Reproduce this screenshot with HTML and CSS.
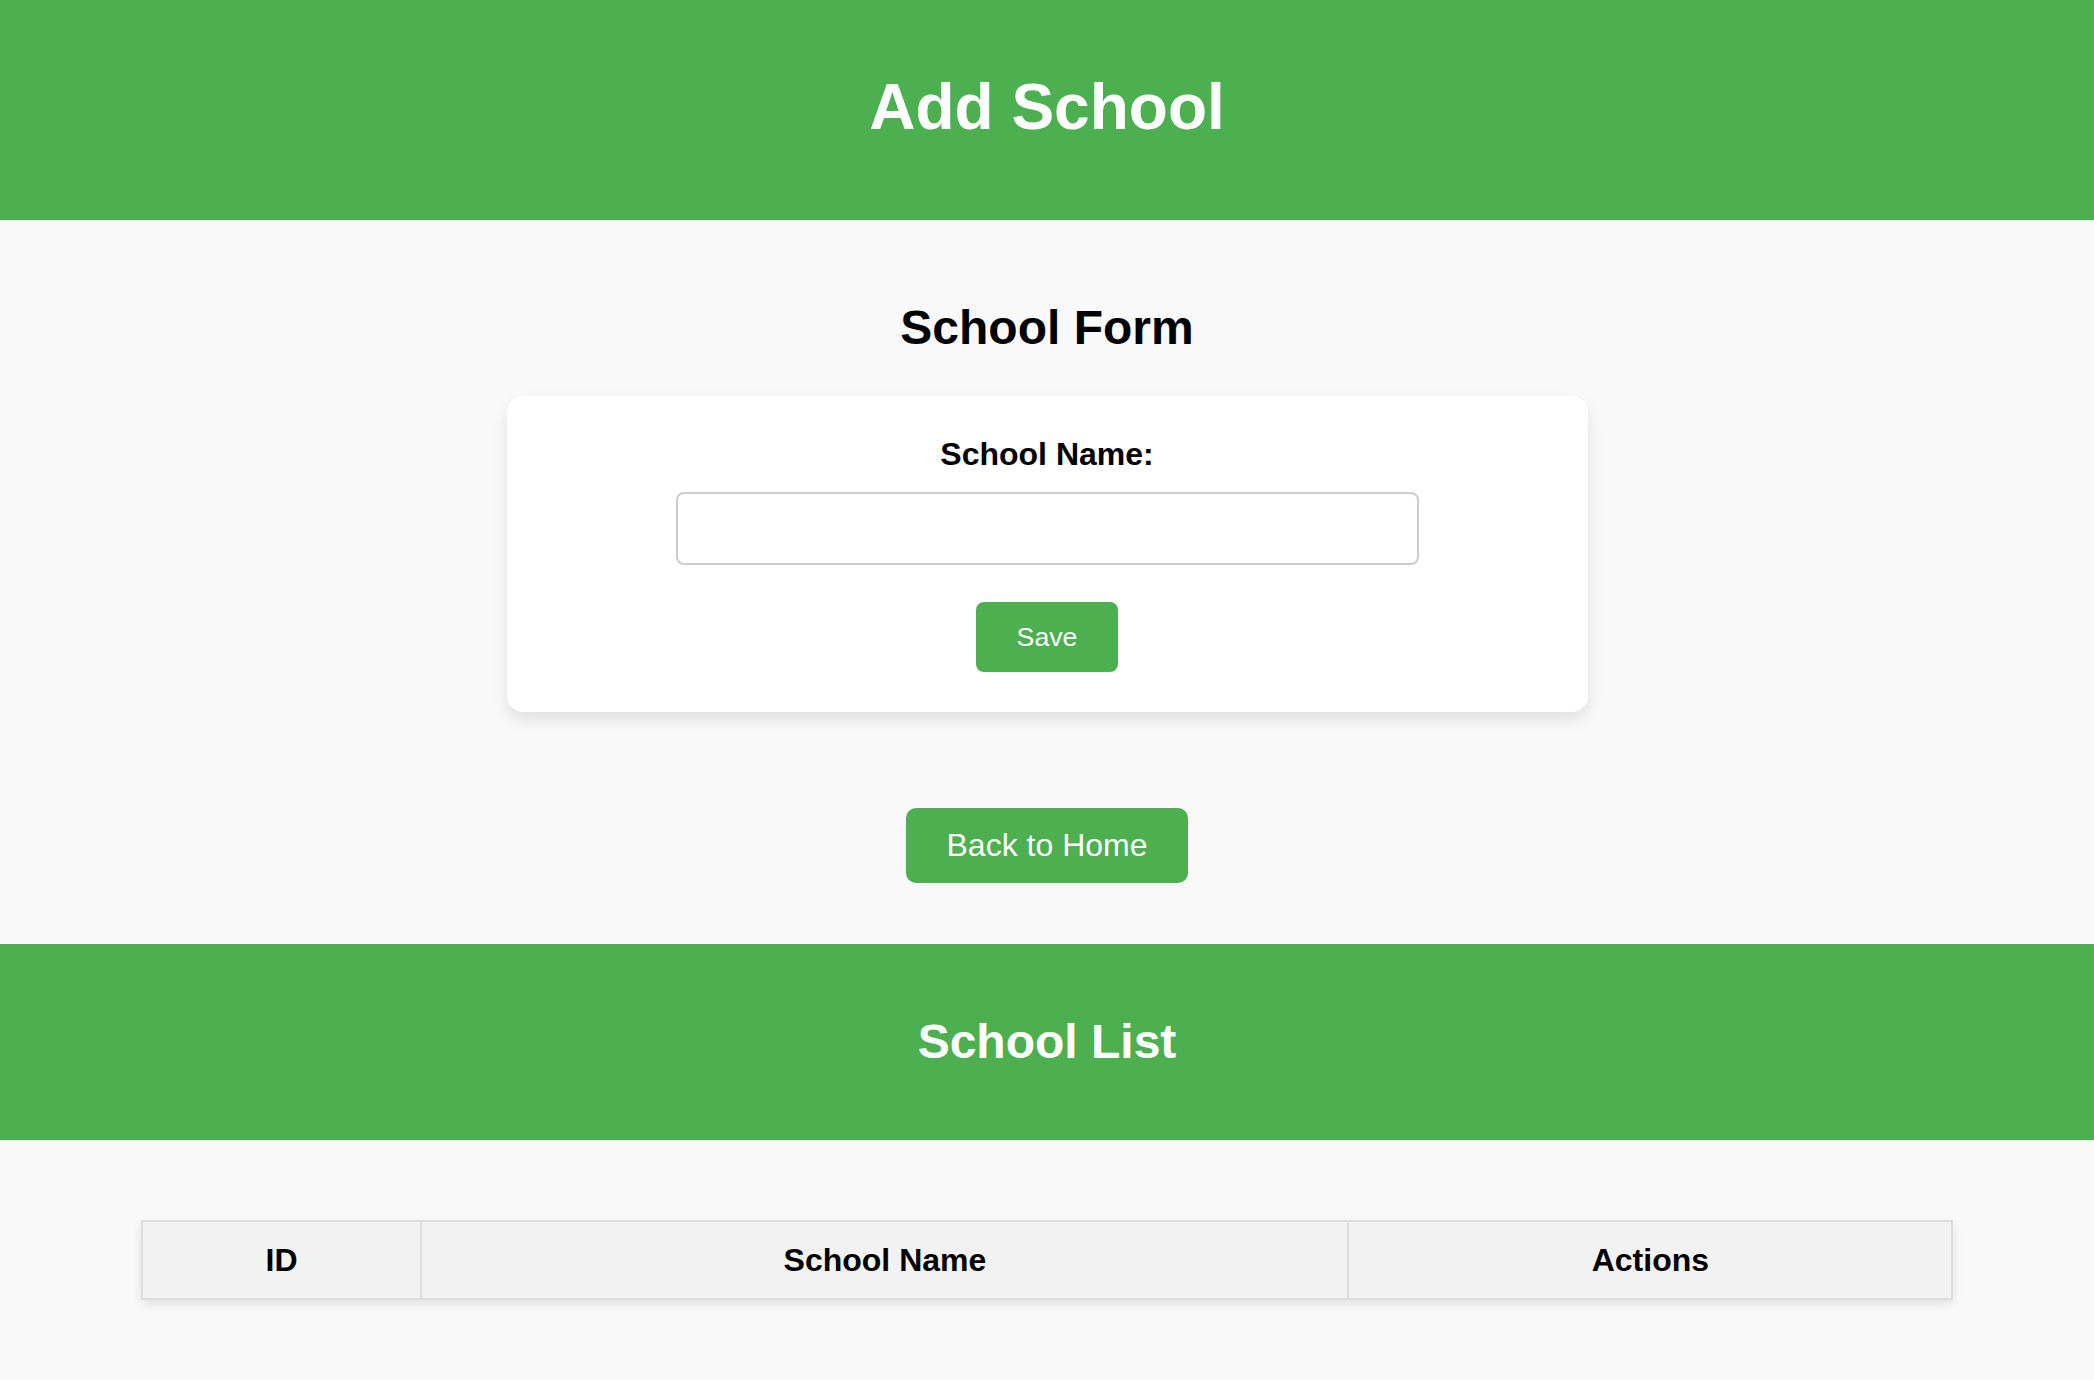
FILE: index.html
```html
<!DOCTYPE html>
<html lang="en">
<head>
<meta charset="utf-8">
<title>Add School</title>
<link rel="stylesheet" href="styles.css">
</head>
<body>
<header class="top-bar">
  <h1 class="top-title">Add School</h1>
</header>
<main class="form-section">
  <h2 class="section-title">School Form</h2>
  <form class="card">
    <label class="field-label" for="schoolName">School Name:</label>
    <input class="field-input" id="schoolName" type="text">
    <div class="actions-row">
      <button class="btn btn-save" type="button">Save</button>
    </div>
  </form>
  <div class="back-row">
    <a class="btn btn-back" href="#">Back to Home</a>
  </div>
</main>
<section class="list-bar">
  <h2 class="list-title">School List</h2>
</section>
<section class="list-section">
  <table class="school-table">
    <thead>
      <tr>
        <th class="col-id">ID</th>
        <th class="col-name">School Name</th>
        <th class="col-actions">Actions</th>
      </tr>
    </thead>
    <tbody></tbody>
  </table>
</section>
</body>
</html>
```

FILE: styles.css
```css
html, body {
  margin: 0;
  padding: 0;
}

body {
  background: #f9f9f9;
  font-family: "Liberation Sans", Arial, sans-serif;
  color: #000;
}

.top-bar {
  background: #4caf50;
  color: #fff;
  padding: 30px 0;
  text-align: center;
}

.top-title {
  margin: 40px 0 46px;
  font-size: 64px;
  line-height: 74px;
  font-weight: bold;
}

.form-section {
  padding: 40px 0 61px;
  text-align: center;
}

.section-title {
  margin: 40px 0;
  font-size: 48px;
  line-height: 56px;
  font-weight: bold;
}

.card {
  width: 1001px;
  margin: 0 auto;
  padding: 40px;
  background: #fff;
  border-radius: 16px;
  box-shadow: 0 8px 16px rgba(0, 0, 0, 0.1);
  display: flex;
  flex-direction: column;
  align-items: center;
}

.field-label {
  display: block;
  font-size: 32px;
  line-height: 36px;
  font-weight: bold;
  margin-bottom: 20px;
}

.field-input {
  box-sizing: border-box;
  width: 743px;
  height: 73px;
  border: 2px solid #ccc;
  border-radius: 8px;
  background: #fff;
  padding: 0 16px;
  font-size: 32px;
  font-family: inherit;
  margin: 0;
}

.actions-row {
  margin-top: 37px;
  display: flex;
  justify-content: center;
}

.btn {
  background: #4caf50;
  color: #fff;
  border: none;
  font-family: inherit;
  text-decoration: none;
  display: inline-block;
  cursor: pointer;
}

.btn-save {
  font-size: 26.67px;
  line-height: 30px;
  padding: 20px 41px;
  border-radius: 8px;
}

.back-row {
  margin-top: 96px;
}

.btn-back {
  font-size: 32px;
  line-height: 35px;
  padding: 20px 41px;
  border-radius: 10px;
}

.list-bar {
  background: #4caf50;
  color: #fff;
  padding: 30px 0;
  text-align: center;
}

.list-title {
  margin: 40px 0;
  font-size: 48px;
  line-height: 56px;
  font-weight: bold;
}

.list-section {
  padding: 40px;
}

.school-table {
  width: 90%;
  margin: 40px auto 0;
  border-collapse: collapse;
  background: #fff;
  box-shadow: 0 4px 10px rgba(0, 0, 0, 0.1);
}

.school-table th {
  background: #f2f2f2;
  border: 2px solid #ddd;
  padding: 20px;
  font-size: 32px;
  line-height: 36px;
  font-weight: bold;
  text-align: center;
}

.col-id { width: 15.45%; }
.col-name { width: 51.2%; }
.col-actions { width: 33.35%; }
```
